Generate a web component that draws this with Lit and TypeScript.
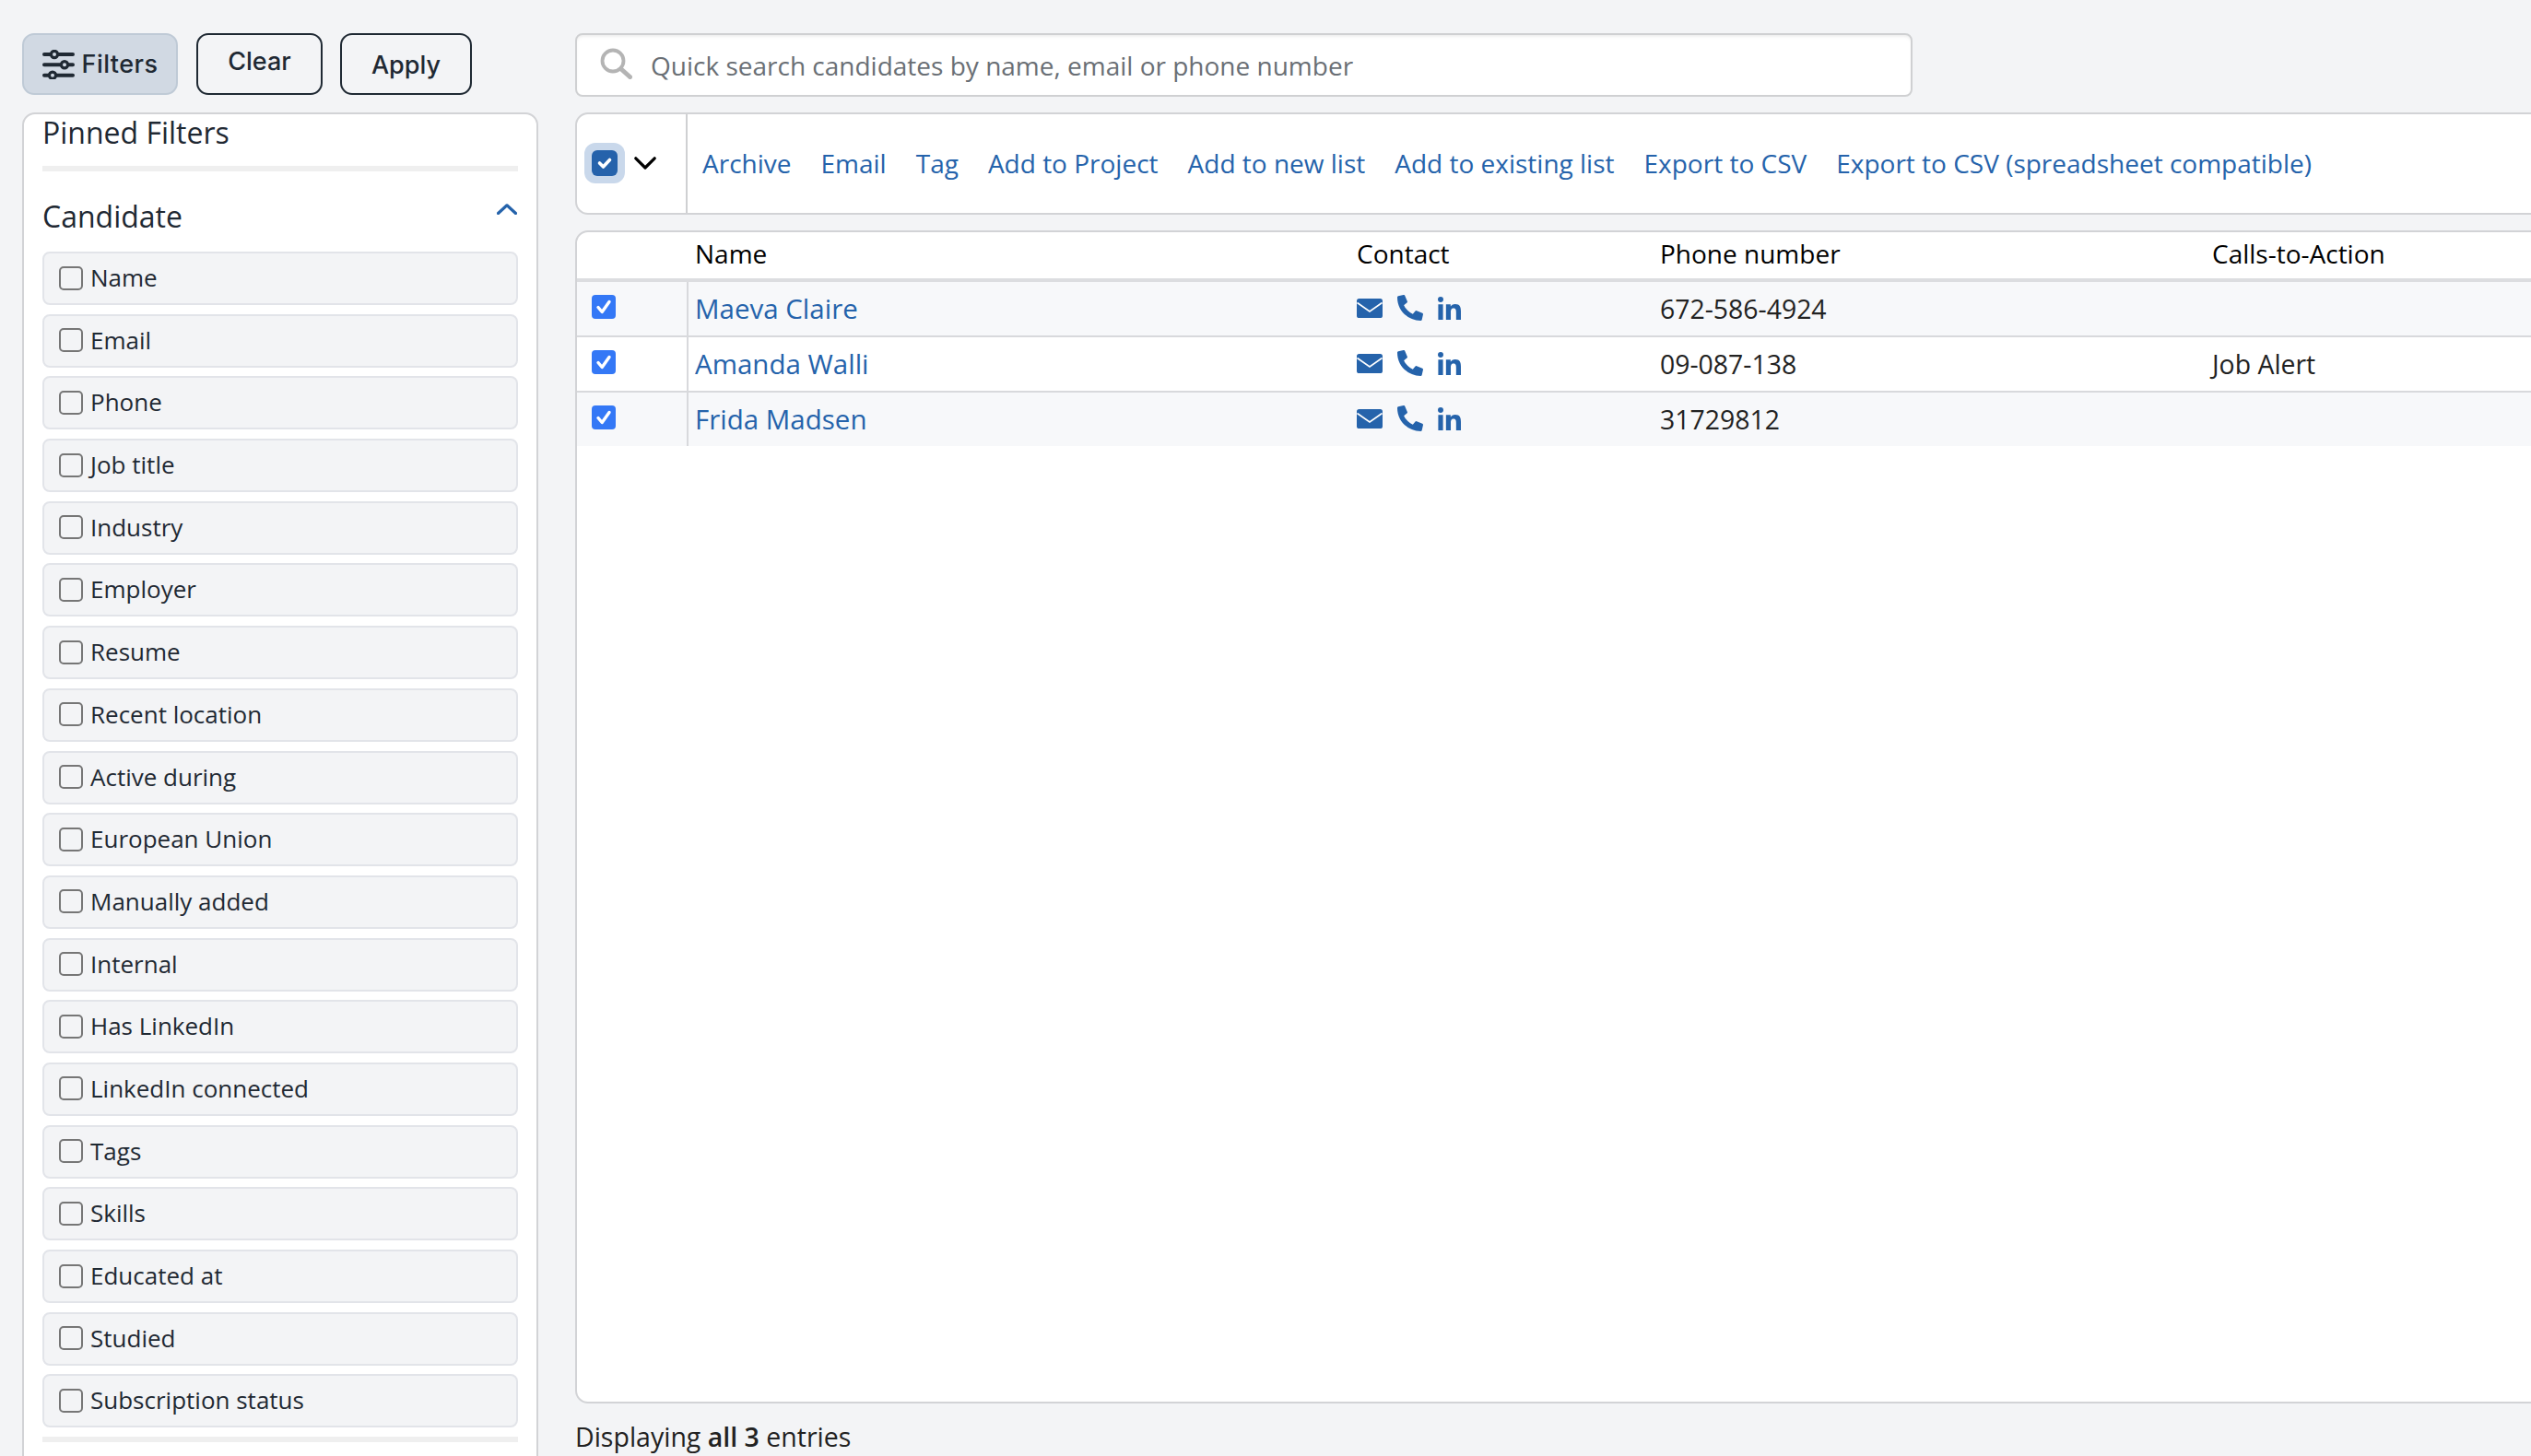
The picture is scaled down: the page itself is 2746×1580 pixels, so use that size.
import { LitElement, html, css, svg } from "lit";
import { customElement } from "lit/decorators.js";

const FILTERS = ["Name","Email","Phone","Job title","Industry","Employer","Resume","Recent location","Active during","European Union","Manually added","Internal","Has LinkedIn","LinkedIn connected","Tags","Skills","Educated at","Studied","Subscription status"];
const ACTIONS = ["Archive","Email","Tag","Add to Project","Add to new list","Add to existing list","Export to CSV","Export to CSV (spreadsheet compatible)"];
const PEOPLE = [
  { name: "Maeva Claire", phone: "672-586-4924", cta: "" },
  { name: "Amanda Walli", phone: "09-087-138", cta: "Job Alert" },
  { name: "Frida Madsen", phone: "31729812", cta: "" },
];

const slidersIcon = svg`<svg class="sliders" viewBox="0 0 35 32" width="35" height="32" fill="none" stroke="#1f2933" stroke-width="4" stroke-linecap="round">
  <path d="M2 5H8.5M17.5 5H33M2 16.3H20M28.5 16.3H33M2 27.7H6.5M15.5 27.7H33"/>
  <g stroke-width="3.2" fill="none"><circle cx="13" cy="5" r="3.6"/><circle cx="24" cy="16.3" r="3.6"/><circle cx="11" cy="27.7" r="3.6"/></g>
</svg>`;
const searchIcon = svg`<svg viewBox="0 0 35 34" width="35" height="34" fill="none" stroke="#b4b4b4" stroke-width="3.8" stroke-linecap="round"><circle cx="14" cy="14" r="11.5"/><path stroke-width="5" d="M23 23 32.5 31.5"/></svg>`;
const chevUp = svg`<svg viewBox="0 0 22 12" width="22" height="12" fill="none" stroke="#2563ab" stroke-width="3.2" stroke-linecap="round" stroke-linejoin="round"><path d="M1.5 10.5 11 1.8 20.5 10.5"/></svg>`;
const chevDown = svg`<svg viewBox="0 0 24 14" width="24" height="14" fill="none" stroke="#000" stroke-width="3.2" stroke-linecap="round" stroke-linejoin="round"><path d="M1.8 1.8 12 12 22.2 1.8"/></svg>`;
const check = svg`<svg viewBox="0 0 26 26" width="26" height="26" fill="none" stroke="#fff" stroke-width="3.4" stroke-linecap="round" stroke-linejoin="round"><path d="M7 13.5 11.2 18.5 19 7.5"/></svg>`;
const checkSmall = svg`<svg viewBox="0 0 28 28" width="28" height="28" fill="none" stroke="#fff" stroke-width="3.6" stroke-linecap="round" stroke-linejoin="round"><path d="M8.5 14 12.5 18 19.5 10.5"/></svg>`;
const mailIcon = svg`<svg viewBox="0 0 28 21" width="28" height="21"><rect width="28" height="21" rx="2.6" fill="#2563ab"/><path d="M0.5 4.5 14 14 27.5 4.5" fill="none" stroke="#fff" stroke-width="1.6"/></svg>`;
const phoneIcon = svg`<svg viewBox="0 0 512 512" width="28" height="28"><path fill="#2563ab" d="M497.39 361.8l-112-48a24 24 0 0 0-28 6.9l-49.6 60.6A370.66 370.66 0 0 1 130.6 204.11l60.6-49.6a23.94 23.94 0 0 0 6.9-28l-48-112A24.16 24.16 0 0 0 122.6.61l-104 24A24 24 0 0 0 0 48c0 256.5 207.9 464 464 464a24 24 0 0 0 23.4-18.6l24-104a24.29 24.29 0 0 0-14.01-27.6z"/></svg>`;
const inIcon = svg`<svg viewBox="0 0 448 448" width="25" height="25"><path fill="#2563ab" d="M100.28 448H7.4V148.9h92.88zM53.79 108.1C24.09 108.1 0 83.5 0 53.8a53.79 53.79 0 0 1 107.58 0c0 29.7-24.1 54.3-53.79 54.3zM447.9 448h-92.68V302.4c0-34.7-.7-79.2-48.29-79.2-48.29 0-55.69 37.7-55.69 76.7V448h-92.78V148.9h89.08v40.8h1.3c12.4-23.5 42.69-48.3 87.88-48.3 94 0 111.28 61.9 111.28 142.3V448z"/></svg>`;

@customElement("app-root")
export class AppRoot extends LitElement {
  static styles = css`
    :host { display: block; width: 2746px; height: 1580px; overflow: hidden; background: #f3f4f6; font-family: "Open Sans", "Noto Sans", sans-serif; color: #1f2933; }
    * { box-sizing: border-box; }
    .page { display: grid; grid-template-columns: 560px 2132px; column-gap: 40px; padding: 36px 0 0 24px; height: 1580px; }
    .left { display: flex; flex-direction: column; gap: 19px; height: 1600px; }
    .btns { display: flex; gap: 20px; height: 67px; }
    .btn { display: flex; align-items: center; justify-content: center; border: 2px solid #1f2933; border-radius: 13px; font-family: Inter, sans-serif; font-weight: 500; font-size: 27px; color: #1f2933; }
    .btn.filters { width: 169px; background: #d1d9e3; border-color: #bfcad6; gap: 8px; letter-spacing: 0.45px; }
    .btn.clear { width: 137px; padding-bottom: 6px; }
    .btn.apply { width: 143px; padding-top: 1px; margin-left: -1px; }
    .card { flex: 1; background: #fff; border: 2px solid #d2d3d6; border-radius: 14px; padding: 0 20px; overflow: hidden; }
    .title { font-size: 32px; line-height: 40px; height: 56px; }
    .hr { height: 6px; background: #efefef; }
    .group { display: flex; justify-content: space-between; align-items: flex-start; height: 87px; padding-top: 29px; font-size: 32px; line-height: 40px; }
    .chev { display: block; margin-top: 6px; margin-right: 1px; line-height: 0; }
    .rows { display: flex; flex-direction: column; gap: 9.7px; margin-bottom: 10px; }
    .row { height: 58px; display: flex; align-items: center; gap: 8px; padding: 0 0 0 16px; background: #f3f4f6; border: 2px solid #e2e4e9; border-radius: 8px; font-size: 26px; color: #1f2933; }
    .row span:last-child { margin-top: -2px; }
    .cb { width: 26px; height: 26px; border: 2px solid #767676; border-radius: 5px; flex: none; margin-top: -1px; }
    .right { display: flex; flex-direction: column; }
    .search { width: 1451px; height: 69px; background: #fff; border: 2px solid #cfd0d2; border-radius: 8px; box-shadow: inset 0 3px 4px -2px #0000001a; display: flex; align-items: center; gap: 20px; padding: 0 0 0 25px; font-size: 28px; color: #6a6f75; margin-bottom: 17px; }
    .search svg { margin-top: -4px; flex: none; }
    .bar { height: 111px; background: #fff; border: 2px solid #d2d3d6; border-radius: 14px 0 0 14px; display: flex; margin-bottom: 17px; }
    .sel { width: 120px; border-right: 2px solid #cfd0d2; flex: none; display: flex; align-items: center; padding-left: 8px; gap: 10px; }
    .halo { width: 44px; height: 44px; border-radius: 12px; background: #c9d8eb; display: flex; align-items: center; justify-content: center; margin-top: -1px; }
    .mini { width: 28px; height: 28px; border-radius: 6px; background: #2562ab; line-height: 0; }
    .sel > svg { margin-top: -1px; }
    .links { display: flex; align-items: center; gap: 32px; padding-left: 16px; font-size: 28px; font-weight: 500; color: #2563ab; white-space: nowrap; margin-top: -1px; }
    .table { height: 1273px; background: #fff; border: 2px solid #d2d3d6; border-radius: 14px 0 0 14px; overflow: hidden; }
    .tr { display: grid; grid-template-columns: 119px 727px 329px 599px 1fr; align-items: center; }
    .thead { font-size: 28px; color: #000; border-bottom: 4px solid #dcdde0; height: 54px; padding-bottom: 5px; }
    .thead div:nth-child(2) { padding-left: 9px; }
    .tbody .tr { height: 60px; border-bottom: 2px solid #d8d9dc; font-size: 28.4px; color: #222; }
    .tbody .tr:nth-child(odd) { background: #f7f8fa; }
    .tbody .tr:last-child { border-bottom: none; height: 58px; }
    .tbody .tr > div { align-self: stretch; display: flex; align-items: center; }
    .c0 { padding-left: 16px; }
    .tbody .tr > .c1 { border-left: 2px solid #d8d9dc; padding: 0 0 1px 7px; color: #2563ab; font-weight: 500; font-size: 29.5px; }
    .box { width: 26px; height: 26px; border-radius: 4px; background: #3478f6; margin-top: -4px; line-height: 0; }
    .icons { gap: 16px; }
    .icons svg { display: block; margin-top: -2px; }
    .foot { font-size: 28.5px; color: #222; line-height: 38px; margin-top: 17px; }
    .foot b { font-weight: 600; }
  `;

  render() {
    return html`<div class="page">
      <div class="left">
        <div class="btns">
          <div class="btn filters">${slidersIcon}<span>Filters</span></div>
          <div class="btn clear">Clear</div>
          <div class="btn apply">Apply</div>
        </div>
        <div class="card">
          <div class="title">Pinned Filters</div>
          <div class="hr"></div>
          <div class="group"><span>Candidate</span><span class="chev">${chevUp}</span></div>
          <div class="rows">
            ${FILTERS.map((f) => html`<div class="row"><span class="cb"></span><span>${f}</span></div>`)}
          </div>
          <div class="hr"></div>
        </div>
      </div>
      <div class="right">
        <div class="search">${searchIcon}<span>Quick search candidates by name, email or phone number</span></div>
        <div class="bar">
          <div class="sel"><div class="halo"><div class="mini">${checkSmall}</div></div>${chevDown}</div>
          <div class="links">${ACTIONS.map((a) => html`<span>${a}</span>`)}</div>
        </div>
        <div class="table">
          <div class="tr thead"><div></div><div>Name</div><div>Contact</div><div>Phone number</div><div>Calls-to-Action</div></div>
          <div class="tbody">
            ${PEOPLE.map((p) => html`<div class="tr">
              <div class="c0"><div class="box">${check}</div></div>
              <div class="c1">${p.name}</div>
              <div class="icons">${mailIcon}${phoneIcon}${inIcon}</div>
              <div>${p.phone}</div>
              <div>${p.cta}</div>
            </div>`)}
          </div>
        </div>
        <div class="foot">Displaying <b>all 3</b> entries</div>
      </div>
    </div>`;
  }
}
